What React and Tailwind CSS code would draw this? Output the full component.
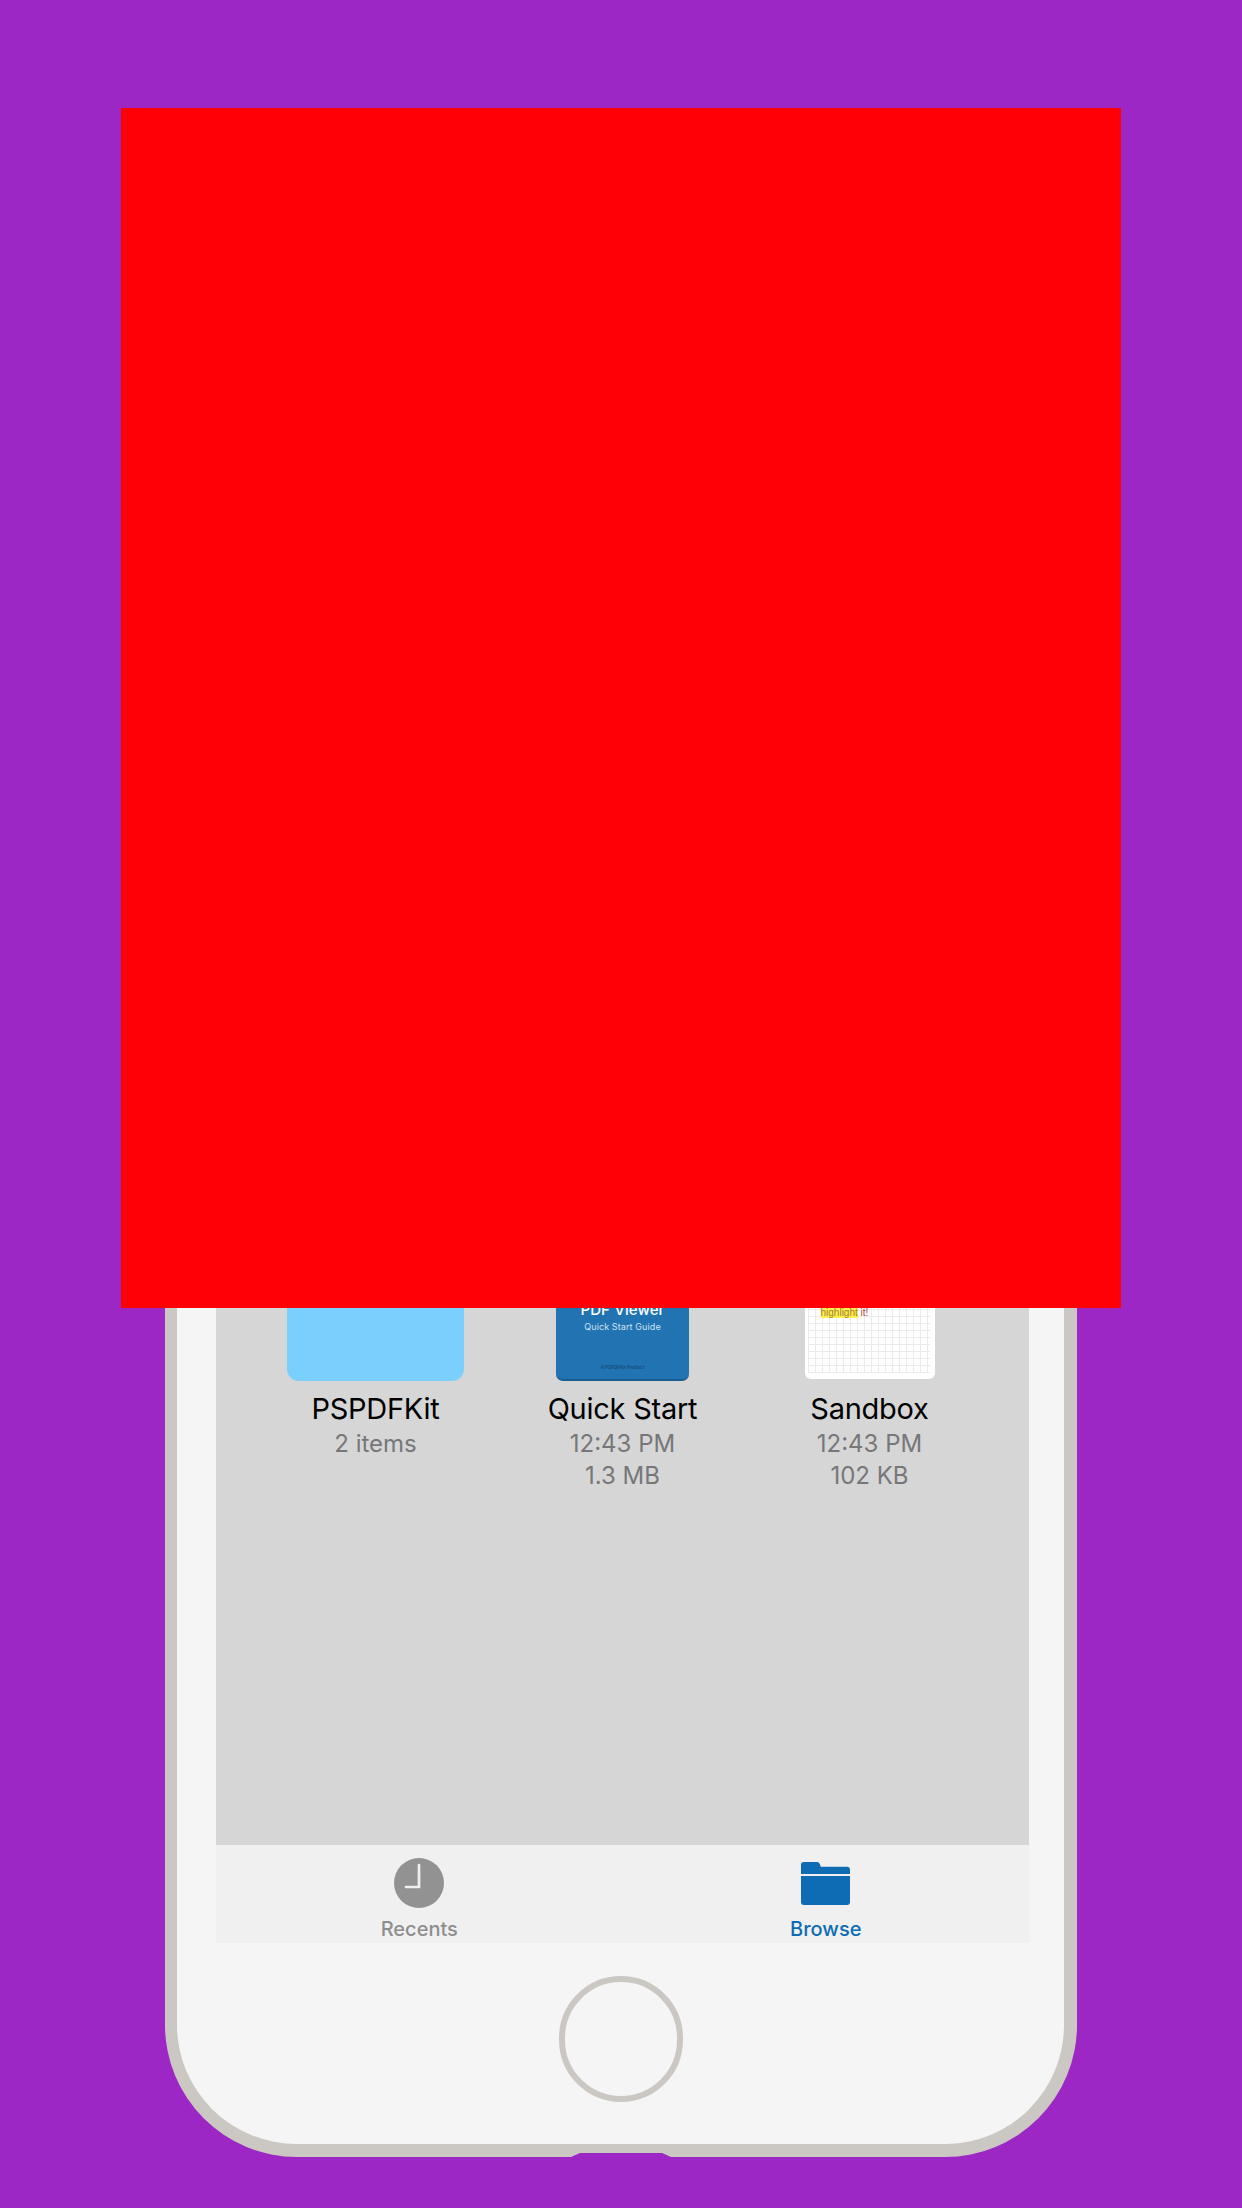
const folderPath = "M3 0h13c1.500 0 2.300.7 2.800 2l1 2.700H46c2 0 3 1.300 3 3V12H0V3c0-2 1-3 3-3zM0 14h49v26c0 2-1 3-3 3H3c-2 0-3-1-3-3z";

function FileItem({ name, lines, children }) {
  return (
    <div className="flex flex-col items-center">
      <div className="flex h-[181px] items-end">{children}</div>
      <p className="mt-[11px] mb-[2px] text-[29px] leading-[34px] tracking-[-0.25px] text-black">{name}</p>
      {lines.map((line) => (
        <p key={line} className="text-[24px] leading-[32px] text-[#77777a]">
          {line}
        </p>
      ))}
    </div>
  );
}

function TabItem({ label, color, children }) {
  return (
    <div className="flex w-[220px] flex-col items-center pt-[13px]">
      <div className="flex h-[50px] items-center justify-center">{children}</div>
      <span className={`mt-[9px] text-[20px] font-medium leading-[24px] ${color}`}>{label}</span>
    </div>
  );
}

export default function App() {
  return (
    <div className="relative h-[2208px] w-[1242px] overflow-hidden bg-[#9d27c5] pt-[1200px] pl-[165px] font-['Inter',sans-serif]">
      <div className="relative flex h-[957px] w-[912px] flex-col rounded-b-[132px] border-l-[12px] border-r-[13px] border-b-[13px] border-[#cbc8c3] bg-[#f5f5f5]">
        <div className="ml-[39px] mr-[35px] flex h-[743px] flex-col">
          <div className="flex-1 bg-[#d6d6d6]">
            <div className="grid grid-cols-[repeat(3,247px)] justify-center">
              <FileItem name="PSPDFKit" lines={["2 items"]}>
                <div className="h-[180px] w-[177px] rounded-[12px] bg-[#7acffd]" />
              </FileItem>
              <FileItem name="Quick Start" lines={["12:43 PM", "1.3 MB"]}>
                <div className="flex h-[180px] w-[133px] flex-col items-center rounded-b-[7px] border-b-2 border-[#1a5d92] bg-[#2173b2] pt-[98px] text-white">
                  <span className="text-[15px] font-medium leading-[21px] tracking-[0.1px]">PDF Viewer</span>
                  <span className="text-[9px] leading-[14px] tracking-[0.1px] text-[#cfe3f3]">Quick Start Guide</span>
                  <span className="mt-[31px] text-[4.500px] font-bold leading-[6px] text-[#17507e]">A PSPDFKit Product</span>
                </div>
              </FileItem>
              <FileItem name="Sandbox" lines={["12:43 PM", "102 KB"]}>
                <div className="mb-[2px] h-[178px] w-[130px] rounded-b-[6px] bg-white pt-[3px] pr-[5px] pb-[6px] pl-[3px]">
                  <div className="h-full bg-[linear-gradient(#ebebeb_1px,transparent_1px),linear-gradient(90deg,#ebebeb_1px,transparent_1px)] bg-[size:7px_7px] pt-[102px] pl-[13px] font-['Liberation_Sans',sans-serif] text-[10px] leading-[14px]">
                    <span className="bg-[#fff04d] text-[#a0803a]">highlight</span>
                    <span className="text-[#b04a45]"> it!</span>
                  </div>
                </div>
              </FileItem>
            </div>
          </div>
          <div className="flex h-[98px] justify-around bg-[#f0f0f0]">
            <TabItem label="Recents" color="text-[#8e8e8e]">
              <svg width="50" height="50" viewBox="0 0 50 50">
                <circle cx="25" cy="25" r="25" fill="#929292" />
                <path d="M25 7v22H12" fill="none" stroke="#f0f0f0" strokeWidth="2.700" strokeLinecap="round" strokeLinejoin="miter" />
              </svg>
            </TabItem>
            <TabItem label="Browse" color="text-[#0e6cb5]">
              <svg width="49" height="43" viewBox="0 0 49 43">
                <path d={folderPath} fill="#0e6cb5" />
              </svg>
            </TabItem>
          </div>
        </div>
        <div className="mt-[33px] ml-[382px] h-[126px] w-[124px] rounded-full border-[6px] border-[#cbc8c3]" />
        <svg className="absolute bottom-[-13px] left-[394px]" width="100" height="5" viewBox="0 0 100 5">
          <path d="M0 5 9 1h82l9 4z" fill="#9d27c5" />
        </svg>
      </div>
      <div className="absolute left-[121px] top-[108px] h-[1200px] w-[1000px] bg-[#ff0006]" />
    </div>
  );
}
